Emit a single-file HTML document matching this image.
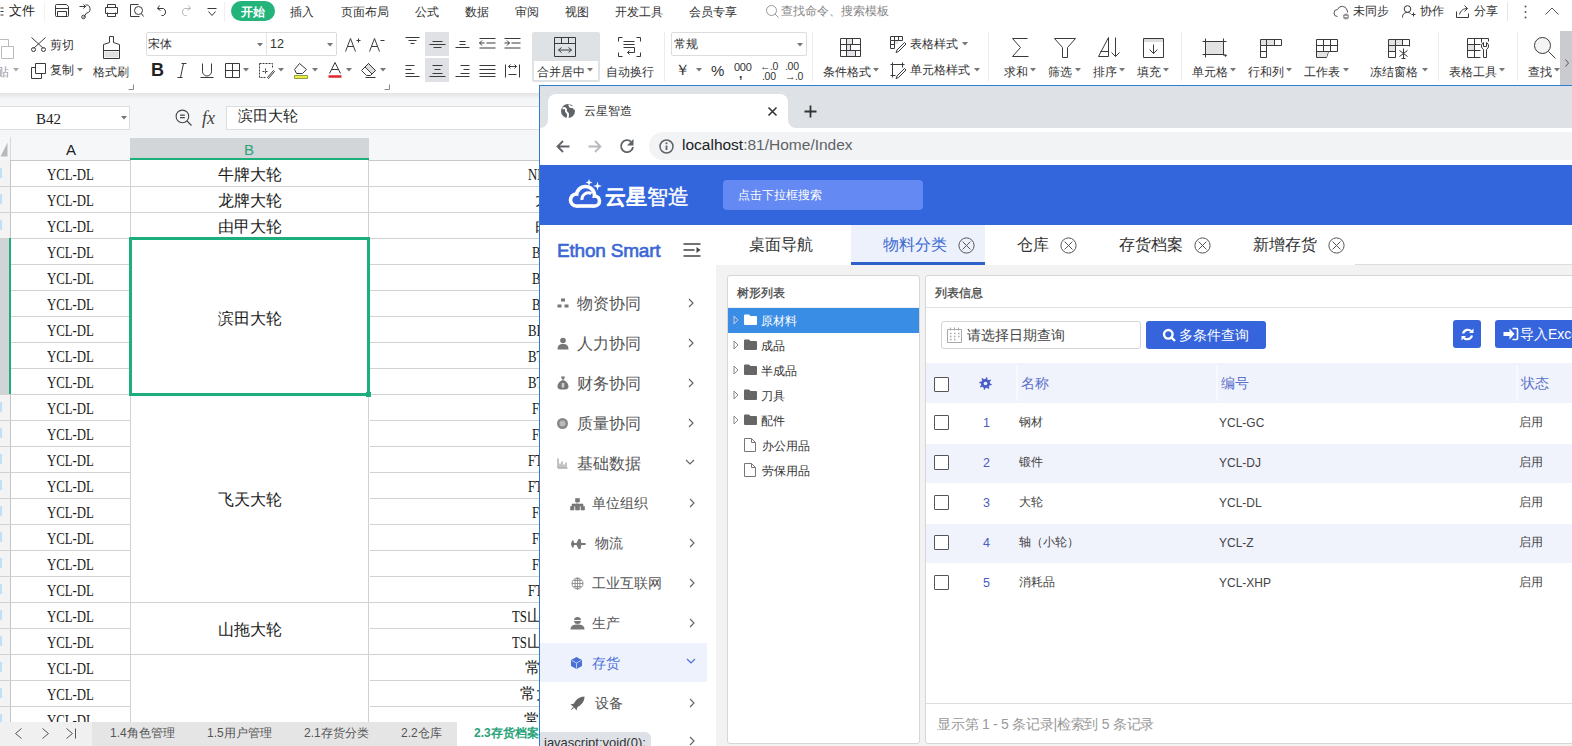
<!DOCTYPE html><html><head><meta charset="utf-8"><style>
*{box-sizing:border-box;margin:0;padding:0}
html,body{width:1572px;height:746px;overflow:hidden;background:#fff;font-family:"Liberation Sans",sans-serif;color:#333}
.a{position:absolute;white-space:nowrap;line-height:1}
svg.a{overflow:visible}
</style></head><body><div class="a" style="left:0;top:0;width:1572px;height:746px;background:#fff">
<div class="a" style="left:0px;top:0px;width:1572px;height:24px;background:#fff"></div>
<svg class="a" style="left:0px;top:6px;" width="4" height="10" viewBox="0 0 4 10" fill="none" stroke="#3a3a3a" stroke-width="1"><g transform="translate(.5 .5)"><path d="M0 1.5H3M0 5H3M0 8.5H3"/></g></svg>
<div class="a" style="left:9px;top:5px;font-size:12.5px;color:#222;">文件</div>
<div class="a" style="left:44px;top:2px;width:1px;height:20px;background:#f2f2f2"></div>
<svg class="a" style="left:54px;top:3px;" width="15" height="14" viewBox="0 0 15 14" fill="none" stroke="#3a3a3a" stroke-width="1"><g transform="translate(.5 .5)"><path d="M2 1H12L14 3V12A1 1 0 0 1 13 13H2A1 1 0 0 1 1 12V2A1 1 0 0 1 2 1Z M3 13V8H12V13 M1 5H14"/></g></svg>
<svg class="a" style="left:79px;top:3px;" width="15" height="16" viewBox="0 0 15 16" fill="none" stroke="#3a3a3a" stroke-width="1"><g transform="translate(.5 .5)"><path d="M0 3H6 M4 1L6 3L4 5 M6 1.5A4 4 0 1 1 7 9.5 L4 14"/><circle cx="4" cy="13.5" r="1.8"/></g></svg>
<svg class="a" style="left:104px;top:3px;" width="14" height="14" viewBox="0 0 14 14" fill="none" stroke="#3a3a3a" stroke-width="1"><g transform="translate(.5 .5)"><path d="M3 4V1H11V4 M1 4H13V10H1Z M3 9V13H11V9"/></g></svg>
<svg class="a" style="left:129px;top:3px;" width="15" height="14" viewBox="0 0 15 14" fill="none" stroke="#3a3a3a" stroke-width="1"><g transform="translate(.5 .5)"><path d="M1 1H9 M1 1V13H10" /><circle cx="9" cy="7" r="4"/><path d="M12 10L14 13"/></g></svg>
<svg class="a" style="left:156px;top:4px;" width="12" height="12" viewBox="0 0 12 12" fill="none" stroke="#3a3a3a" stroke-width="1"><g transform="translate(.5 .5)"><path d="M3 1L1 4L4 6 M1 4H7A4 4 0 0 1 7 11H5"/></g></svg>
<svg class="a" style="left:179px;top:4px;opacity:.35" width="12" height="12" viewBox="0 0 12 12" fill="none" stroke="#3a3a3a" stroke-width="1"><g transform="translate(.5 .5)"><path d="M9 1L11 4L8 6 M11 4H5A4 4 0 0 0 5 11H7"/></g></svg>
<svg class="a" style="left:206px;top:7px;" width="11" height="9" viewBox="0 0 11 9" fill="none" stroke="#3a3a3a" stroke-width="1"><g transform="translate(.5 .5)"><path d="M1 1H10 M2 4L5.5 8L9 4"/></g></svg>
<div class="a" style="left:224px;top:2px;width:1px;height:20px;background:#f0f0f0"></div>
<div class="a" style="left:231px;top:1px;width:44px;height:20px;background:#22b47b;border-radius:10px"></div>
<div class="a" style="left:241px;top:5.5px;font-size:12px;color:#fff;font-weight:bold">开始</div>
<div class="a" style="left:290px;top:6px;font-size:12px;color:#333;">插入</div>
<div class="a" style="left:341px;top:6px;font-size:12px;color:#333;">页面布局</div>
<div class="a" style="left:415px;top:6px;font-size:12px;color:#333;">公式</div>
<div class="a" style="left:465px;top:6px;font-size:12px;color:#333;">数据</div>
<div class="a" style="left:515px;top:6px;font-size:12px;color:#333;">审阅</div>
<div class="a" style="left:565px;top:6px;font-size:12px;color:#333;">视图</div>
<div class="a" style="left:615px;top:6px;font-size:12px;color:#333;">开发工具</div>
<div class="a" style="left:689px;top:6px;font-size:12px;color:#333;">会员专享</div>
<svg class="a" style="left:765px;top:4px;stroke:#999" width="14" height="14" viewBox="0 0 14 14" fill="none" stroke="#3a3a3a" stroke-width="1"><g transform="translate(.5 .5)"><circle cx="6" cy="6" r="5"/><path d="M9.5 9.5L13 13"/></g></svg>
<div class="a" style="left:781px;top:5px;font-size:12px;color:#888;">查找命令、搜索模板</div>
<svg class="a" style="left:1333px;top:4px;stroke:#555" width="17" height="15" viewBox="0 0 17 15" fill="none" stroke="#3a3a3a" stroke-width="1"><g transform="translate(.5 .5)"><path d="M4 12A3.5 3.5 0 0 1 4 5A5 5 0 0 1 13.5 5.5A3 3 0 0 1 14 8"/><circle cx="12.5" cy="12" r="3" fill="#999" stroke="none"/><path d="M11 12H14" stroke="#fff"/></g></svg>
<div class="a" style="left:1353px;top:5px;font-size:12px;color:#333;">未同步</div>
<svg class="a" style="left:1401px;top:4px;" width="14" height="14" viewBox="0 0 14 14" fill="none" stroke="#3a3a3a" stroke-width="1"><g transform="translate(.5 .5)"><circle cx="6" cy="4.5" r="3.3"/><path d="M1 13C1 9 3.5 8 6 8C7.5 8 8.5 8.4 9 9 M10 10H14 M12 8V12"/></g></svg>
<div class="a" style="left:1420px;top:5px;font-size:12px;color:#333;">协作</div>
<svg class="a" style="left:1455px;top:4px;" width="15" height="14" viewBox="0 0 15 14" fill="none" stroke="#3a3a3a" stroke-width="1"><g transform="translate(.5 .5)"><path d="M1 7V13H13V9 M4 10C5 6 8 4 12 4 M9 1L12 4L9 7"/></g></svg>
<div class="a" style="left:1474px;top:5px;font-size:12px;color:#333;">分享</div>
<div class="a" style="left:1507px;top:2px;width:1px;height:19px;background:#e6e6e6"></div>
<svg class="a" style="left:1523px;top:4px;" width="4" height="15" viewBox="0 0 4 15" fill="none" stroke="#3a3a3a" stroke-width="1"><g transform="translate(.5 .5)"><circle cx="2" cy="2" r="1" fill="#555" stroke="none"/><circle cx="2" cy="7.5" r="1" fill="#555" stroke="none"/><circle cx="2" cy="13" r="1" fill="#555" stroke="none"/></g></svg>
<svg class="a" style="left:1544px;top:6px;stroke:#555" width="15" height="9" viewBox="0 0 15 9" fill="none" stroke="#3a3a3a" stroke-width="1"><g transform="translate(.5 .5)"><path d="M1 8L7.5 1.5L14 8"/></g></svg>
<svg class="a" style="left:0px;top:36px;stroke:#bbb" width="14" height="22" viewBox="0 0 14 22" fill="none" stroke="#3a3a3a" stroke-width="1"><g transform="translate(.5 .5)"><path d="M-4 3H8V10 M1 10H13V22H1Z" /></g></svg>
<div class="a" style="left:0px;top:66px;font-size:12px;color:#999;left:-3px">贴</div>
<svg class="a" style="left:13px;top:68px" width="6" height="4"><path d="M0 0H6L3 3.5Z" fill="#aaa"/></svg>
<svg class="a" style="left:30px;top:36px;" width="17" height="16" viewBox="0 0 17 16" fill="none" stroke="#3a3a3a" stroke-width="1"><g transform="translate(.5 .5)"><path d="M1 1L13 12 M15 1L3 12"/><circle cx="3" cy="13" r="2"/><circle cx="13" cy="13" r="2"/></g></svg>
<div class="a" style="left:50px;top:39px;font-size:12px;color:#333;">剪切</div>
<svg class="a" style="left:30px;top:62px;" width="16" height="17" viewBox="0 0 16 17" fill="none" stroke="#3a3a3a" stroke-width="1"><g transform="translate(.5 .5)"><path d="M5 1H15V11H5Z M1 5H5 M1 5V16H11V11"/></g></svg>
<div class="a" style="left:50px;top:64px;font-size:12px;color:#333;">复制</div>
<svg class="a" style="left:77px;top:68px" width="6" height="4"><path d="M0 0H6L3 3.5Z" fill="#777"/></svg>
<svg class="a" style="left:102px;top:35px;" width="18" height="25" viewBox="0 0 18 25" fill="none" stroke="#3a3a3a" stroke-width="1"><g transform="translate(.5 .5)"><path d="M7 1H11V7L17 9V23H1V9L7 7Z M1 15H17"/><path d="M2 16H16V22H2Z" fill="#e1e1e1" stroke="none"/></g></svg>
<div class="a" style="left:93px;top:66px;font-size:12px;color:#333;">格式刷</div>
<svg class="a" style="left:128px;top:84px;stroke:#888" width="6" height="6" viewBox="0 0 6 6" fill="none" stroke="#3a3a3a" stroke-width="1"><g transform="translate(.5 .5)"><path d="M5 0V5H0"/></g></svg>
<div class="a" style="left:146px;top:32px;width:191px;height:24px;background:#fff;border:1px solid #dcdcdc;border-radius:2px"></div>
<div class="a" style="left:266px;top:33px;width:1px;height:22px;background:#e4e4e4"></div>
<div class="a" style="left:148px;top:38px;font-size:12px;color:#333;">宋体</div>
<svg class="a" style="left:257px;top:43px" width="6" height="4"><path d="M0 0H6L3 3.5Z" fill="#777"/></svg>
<div class="a" style="left:270px;top:38px;font-size:12.5px;color:#333;">12</div>
<svg class="a" style="left:327px;top:43px" width="6" height="4"><path d="M0 0H6L3 3.5Z" fill="#777"/></svg>
<svg class="a" style="left:344px;top:36px;" width="17" height="16" viewBox="0 0 17 16" fill="none" stroke="#3a3a3a" stroke-width="1"><g transform="translate(.5 .5)"><path d="M1 15L6 2L11 15 M3 10H9 M12 4H16 M14 2V6"/></g></svg>
<svg class="a" style="left:368px;top:36px;" width="17" height="16" viewBox="0 0 17 16" fill="none" stroke="#3a3a3a" stroke-width="1"><g transform="translate(.5 .5)"><path d="M1 15L6 2L11 15 M3 10H9 M12 4H16"/></g></svg>
<div class="a" style="left:151px;top:61px;font-size:18px;color:#222;font-weight:bold">B</div>
<svg class="a" style="left:176px;top:62px;" width="11" height="16" viewBox="0 0 11 16" fill="none" stroke="#3a3a3a" stroke-width="1"><g transform="translate(.5 .5)"><path d="M7 1L4 15 M5 1H10 M1 15H6"/></g></svg>
<svg class="a" style="left:199px;top:62px;" width="15" height="16" viewBox="0 0 15 16" fill="none" stroke="#3a3a3a" stroke-width="1"><g transform="translate(.5 .5)"><path d="M3 1V9A4.5 4.5 0 0 0 12 9V1 M1 15H14"/></g></svg>
<svg class="a" style="left:224px;top:62px;" width="16" height="16" viewBox="0 0 16 16" fill="none" stroke="#3a3a3a" stroke-width="1"><g transform="translate(.5 .5)"><path d="M1 1H15V15H1Z M8 1V15 M1 8H15"/></g></svg>
<svg class="a" style="left:243px;top:68px" width="6" height="4"><path d="M0 0H6L3 3.5Z" fill="#777"/></svg>
<svg class="a" style="left:258px;top:62px;" width="17" height="16" viewBox="0 0 17 16" fill="none" stroke="#3a3a3a" stroke-width="1"><g transform="translate(.5 .5)"><path d="M1 1H14V6 M1 1V15H7 M7 6V12 M4 9H10" stroke-dasharray="2 1"/><path d="M9 15L15 8L16 9L10 16Z"/></g></svg>
<svg class="a" style="left:278px;top:68px" width="6" height="4"><path d="M0 0H6L3 3.5Z" fill="#777"/></svg>
<svg class="a" style="left:292px;top:61px;" width="17" height="18" viewBox="0 0 17 18" fill="none" stroke="#3a3a3a" stroke-width="1"><g transform="translate(.5 .5)"><path d="M2 8L7 2L14 8L10 12H4Z"/><path d="M2 14H15V17H2Z" fill="#f0ee3a" stroke="#8aa04a"/></g></svg>
<svg class="a" style="left:312px;top:68px" width="6" height="4"><path d="M0 0H6L3 3.5Z" fill="#777"/></svg>
<svg class="a" style="left:327px;top:61px;" width="15" height="18" viewBox="0 0 15 18" fill="none" stroke="#3a3a3a" stroke-width="1"><g transform="translate(.5 .5)"><path d="M2 12L7.5 1L13 12 M4 8H11"/><path d="M1 15H14" stroke="#e0242b" stroke-width="2.5"/></g></svg>
<svg class="a" style="left:346px;top:68px" width="6" height="4"><path d="M0 0H6L3 3.5Z" fill="#777"/></svg>
<svg class="a" style="left:360px;top:62px;" width="17" height="16" viewBox="0 0 17 16" fill="none" stroke="#3a3a3a" stroke-width="1"><g transform="translate(.5 .5)"><path d="M1 8L8 1L15 8L10 13H6Z" /><path d="M8 1L15 8L11.5 11.5L4.5 4.5Z" fill="#ddd"/><path d="M5 15H15"/></g></svg>
<svg class="a" style="left:380px;top:68px" width="6" height="4"><path d="M0 0H6L3 3.5Z" fill="#777"/></svg>
<svg class="a" style="left:384px;top:84px;stroke:#888" width="6" height="6" viewBox="0 0 6 6" fill="none" stroke="#3a3a3a" stroke-width="1"><g transform="translate(.5 .5)"><path d="M5 0V5H0"/></g></svg>
<div class="a" style="left:425px;top:32px;width:24px;height:24px;background:#dfe1e4"></div>
<div class="a" style="left:425px;top:58px;width:24px;height:24px;background:#dfe1e4"></div>
<svg class="a" style="left:405px;top:36px;" width="14" height="9" viewBox="0 0 14 9" fill="none" stroke="#3a3a3a" stroke-width="1"><g transform="translate(.5 .5)"><path d="M0 1H14 M3 4H11 M5 7H9"/></g></svg>
<svg class="a" style="left:429px;top:40px;" width="16" height="8" viewBox="0 0 16 8" fill="none" stroke="#3a3a3a" stroke-width="1"><g transform="translate(.5 .5)"><path d="M0 4H16 M3 1H13 M4 7H12"/></g></svg>
<svg class="a" style="left:455px;top:40px;" width="14" height="9" viewBox="0 0 14 9" fill="none" stroke="#3a3a3a" stroke-width="1"><g transform="translate(.5 .5)"><path d="M4 1H10 M4 4H10 M0 7H14"/></g></svg>
<svg class="a" style="left:479px;top:37px;" width="16" height="12" viewBox="0 0 16 12" fill="none" stroke="#3a3a3a" stroke-width="1"><g transform="translate(.5 .5)"><path d="M0 1H16 M7 5.5H16 M0 10.5H16 M0 5.5H5 M2.5 3L0 5.5L2.5 8"/></g></svg>
<svg class="a" style="left:504px;top:37px;" width="16" height="12" viewBox="0 0 16 12" fill="none" stroke="#3a3a3a" stroke-width="1"><g transform="translate(.5 .5)"><path d="M0 1H16 M7 5.5H16 M0 10.5H16 M0 5.5H5 M2.5 3L5 5.5L2.5 8"/></g></svg>
<svg class="a" style="left:405px;top:64px;" width="14" height="12" viewBox="0 0 14 12" fill="none" stroke="#3a3a3a" stroke-width="1"><g transform="translate(.5 .5)"><path d="M0 1H9 M0 5H6 M0 9H9 M0 12H14"/></g></svg>
<svg class="a" style="left:429px;top:64px;" width="16" height="12" viewBox="0 0 16 12" fill="none" stroke="#3a3a3a" stroke-width="1"><g transform="translate(.5 .5)"><path d="M3 1H13 M5 5H11 M3 9H13 M0 12H16"/></g></svg>
<svg class="a" style="left:455px;top:64px;" width="14" height="12" viewBox="0 0 14 12" fill="none" stroke="#3a3a3a" stroke-width="1"><g transform="translate(.5 .5)"><path d="M5 1H14 M8 5H14 M5 9H14 M0 12H14"/></g></svg>
<svg class="a" style="left:479px;top:64px;" width="16" height="12" viewBox="0 0 16 12" fill="none" stroke="#3a3a3a" stroke-width="1"><g transform="translate(.5 .5)"><path d="M0 1H16 M0 5H16 M0 9H16 M0 12H16"/></g></svg>
<svg class="a" style="left:504px;top:63px;" width="16" height="14" viewBox="0 0 16 14" fill="none" stroke="#3a3a3a" stroke-width="1"><g transform="translate(.5 .5)"><path d="M1 1V14 M15 1V14 M4 3H12 M4 11H12 M4 3L6 1 M4 3L6 5 M12 3L10 1 M12 3L10 5"/></g></svg>
<div class="a" style="left:532px;top:32px;width:68px;height:50px;background:#dfe2e5;border-radius:2px"></div>
<div class="a" style="left:534px;top:61px;width:64px;height:19px;background:#fff"></div>
<svg class="a" style="left:554px;top:37px;" width="23" height="20" viewBox="0 0 23 20" fill="none" stroke="#3a3a3a" stroke-width="1"><g transform="translate(.5 .5)"><path d="M0 0H21V19H0Z M0 6H21 M7 0V6 M14 0V6 M4 12.5H17 M4 12.5L7 10 M4 12.5L7 15 M17 12.5L14 10 M17 12.5L14 15"/></g></svg>
<div class="a" style="left:537px;top:66px;font-size:12px;color:#333;">合并居中</div>
<svg class="a" style="left:587px;top:68px" width="6" height="4"><path d="M0 0H6L3 3.5Z" fill="#777"/></svg>
<svg class="a" style="left:618px;top:37px;" width="23" height="20" viewBox="0 0 23 20" fill="none" stroke="#3a3a3a" stroke-width="1"><g transform="translate(.5 .5)"><path d="M4 0H0V4 M18 0H22V4 M4 19H0V15 M18 19H22V15 M5 4H16 M5 7H16 M5 10H16V15H9 M11 13L9 15L11 17"/></g></svg>
<div class="a" style="left:606px;top:66px;font-size:12px;color:#333;">自动换行</div>
<div class="a" style="left:664px;top:32px;width:1px;height:49px;background:#ececec"></div>
<div class="a" style="left:671px;top:32px;width:136px;height:24px;background:#fff;border:1px solid #dcdcdc;border-radius:2px"></div>
<div class="a" style="left:674px;top:38px;font-size:12px;color:#333;">常规</div>
<svg class="a" style="left:797px;top:43px" width="6" height="4"><path d="M0 0H6L3 3.5Z" fill="#777"/></svg>
<div class="a" style="left:675px;top:62px;font-size:15px;color:#333;">￥</div>
<svg class="a" style="left:696px;top:68px" width="6" height="4"><path d="M0 0H6L3 3.5Z" fill="#777"/></svg>
<div class="a" style="left:711px;top:63px;font-size:15px;color:#333;">%</div>
<div class="a" style="left:734px;top:62px;font-size:11px;color:#333;letter-spacing:-0.3px">000</div>
<div class="a" style="left:739px;top:68px;font-size:12px;color:#333;font-weight:bold">,</div>
<div class="a" style="left:760px;top:61px;font-size:10.5px;color:#333;letter-spacing:-0.5px">←.0</div>
<div class="a" style="left:762px;top:71px;font-size:10.5px;color:#333;letter-spacing:-0.3px">.00</div>
<div class="a" style="left:785px;top:61px;font-size:10.5px;color:#333;letter-spacing:-0.3px">.00</div>
<div class="a" style="left:785px;top:71px;font-size:10.5px;color:#333;letter-spacing:-0.5px">→.0</div>
<div class="a" style="left:812px;top:32px;width:1px;height:49px;background:#ececec"></div>
<svg class="a" style="left:840px;top:38px;" width="22" height="20" viewBox="0 0 22 20" fill="none" stroke="#3a3a3a" stroke-width="1"><g transform="translate(.5 .5)"><path d="M6 0H12V6H6Z M6 6H10V12H6Z M6 12H15V18H6Z" fill="#e2e4e8" stroke="none"/><path d="M0 0H20V18H0Z M0 6H20 M0 12H20 M6 0V18 M12 0V6 M10 6V12 M15 12V18"/></g></svg>
<div class="a" style="left:823px;top:66px;font-size:12px;color:#333;">条件格式</div>
<svg class="a" style="left:873px;top:68px" width="6" height="4"><path d="M0 0H6L3 3.5Z" fill="#777"/></svg>
<svg class="a" style="left:890px;top:36px;" width="16" height="17" viewBox="0 0 16 17" fill="none" stroke="#3a3a3a" stroke-width="1"><g transform="translate(.5 .5)"><path d="M0 0H12V4H0Z M0 4V12H4V0 M8 0V4 M0 8H4" /><path d="M4.5 4.5H7.5V7.5H4.5Z" fill="#e2e4e8" stroke="none"/><path d="M14 6L6.5 13.5L5.5 16L8 15L15.5 7.5Z"/></g></svg>
<div class="a" style="left:910px;top:38px;font-size:12px;color:#333;">表格样式</div>
<svg class="a" style="left:962px;top:42px" width="6" height="4"><path d="M0 0H6L3 3.5Z" fill="#777"/></svg>
<svg class="a" style="left:890px;top:62px;" width="16" height="17" viewBox="0 0 16 17" fill="none" stroke="#3a3a3a" stroke-width="1"><g transform="translate(.5 .5)"><path d="M2 0V15 M0 2H14 M12 0V5 M0 13H5 M14 6L6.5 13.5L5.5 16L8 15L15.5 7.5Z"/></g></svg>
<div class="a" style="left:910px;top:64px;font-size:12px;color:#333;">单元格样式</div>
<svg class="a" style="left:974px;top:68px" width="6" height="4"><path d="M0 0H6L3 3.5Z" fill="#777"/></svg>
<div class="a" style="left:988px;top:32px;width:1px;height:49px;background:#ececec"></div>
<svg class="a" style="left:1011px;top:37px;" width="18" height="21" viewBox="0 0 18 21" fill="none" stroke="#3a3a3a" stroke-width="1"><g transform="translate(.5 .5)"><path d="M16 1H1L9 10L1 19H17"/></g></svg>
<div class="a" style="left:1004px;top:66px;font-size:12px;color:#333;">求和</div>
<svg class="a" style="left:1030px;top:68px" width="6" height="4"><path d="M0 0H6L3 3.5Z" fill="#777"/></svg>
<svg class="a" style="left:1053px;top:37px;" width="23" height="21" viewBox="0 0 23 21" fill="none" stroke="#3a3a3a" stroke-width="1"><g transform="translate(.5 .5)"><path d="M1 1H22L14 10V20H9V10Z"/></g></svg>
<div class="a" style="left:1048px;top:66px;font-size:12px;color:#333;">筛选</div>
<svg class="a" style="left:1075px;top:68px" width="6" height="4"><path d="M0 0H6L3 3.5Z" fill="#777"/></svg>
<svg class="a" style="left:1097px;top:36px;" width="24" height="22" viewBox="0 0 24 22" fill="none" stroke="#3a3a3a" stroke-width="1"><g transform="translate(.5 .5)"><path d="M1 20L11 1V20Z M3 15H11 M18 1V20 M14 16L18 20L22 16"/></g></svg>
<div class="a" style="left:1093px;top:66px;font-size:12px;color:#333;">排序</div>
<svg class="a" style="left:1119px;top:68px" width="6" height="4"><path d="M0 0H6L3 3.5Z" fill="#777"/></svg>
<svg class="a" style="left:1142px;top:37px;" width="22" height="21" viewBox="0 0 22 21" fill="none" stroke="#3a3a3a" stroke-width="1"><g transform="translate(.5 .5)"><path d="M1 1H21V20H1Z M11 7V16 M7 12L11 16L15 12"/><path d="M1.5 1.5H20.5V4.5H1.5Z" fill="#ddd" stroke="none"/></g></svg>
<div class="a" style="left:1137px;top:66px;font-size:12px;color:#333;">填充</div>
<svg class="a" style="left:1163px;top:68px" width="6" height="4"><path d="M0 0H6L3 3.5Z" fill="#777"/></svg>
<div class="a" style="left:1181px;top:32px;width:1px;height:49px;background:#ececec"></div>
<svg class="a" style="left:1202px;top:38px;" width="25" height="20" viewBox="0 0 25 20" fill="none" stroke="#3a3a3a" stroke-width="1"><g transform="translate(.5 .5)"><path d="M0 3H24 M0 16H22 M3 0V19 M21 0V17"/><path d="M3.5 3.5H20.5V15.5H3.5Z" fill="#e3e3e3" stroke="none"/><circle cx="23" cy="17" r=".8" fill="#444"/></g></svg>
<div class="a" style="left:1192px;top:66px;font-size:12px;color:#333;">单元格</div>
<svg class="a" style="left:1230px;top:68px" width="6" height="4"><path d="M0 0H6L3 3.5Z" fill="#777"/></svg>
<svg class="a" style="left:1259px;top:38px;" width="23" height="20" viewBox="0 0 23 20" fill="none" stroke="#3a3a3a" stroke-width="1"><g transform="translate(.5 .5)"><path d="M1 1H22V7H1Z M1 7V19H7V1 M7 13H1 M15 1V7"/><path d="M1.5 1.5H6.5V6.5H1.5Z M7.5 1.5H14.5V6.5H7.5Z" fill="#e3e3e3" stroke="none"/></g></svg>
<div class="a" style="left:1248px;top:66px;font-size:12px;color:#333;">行和列</div>
<svg class="a" style="left:1286px;top:68px" width="6" height="4"><path d="M0 0H6L3 3.5Z" fill="#777"/></svg>
<svg class="a" style="left:1315px;top:38px;" width="23" height="20" viewBox="0 0 23 20" fill="none" stroke="#3a3a3a" stroke-width="1"><g transform="translate(.5 .5)"><path d="M1 1H22V13H13L11 19H1Z M1 7H22 M1 13H13 M8 1V13 M15 1V13"/><path d="M1.5 13.5H12.5L11 18.5H1.5Z" fill="#e3e3e3" stroke="none"/></g></svg>
<div class="a" style="left:1304px;top:66px;font-size:12px;color:#333;">工作表</div>
<svg class="a" style="left:1343px;top:68px" width="6" height="4"><path d="M0 0H6L3 3.5Z" fill="#777"/></svg>
<svg class="a" style="left:1387px;top:38px;" width="23" height="21" viewBox="0 0 23 21" fill="none" stroke="#3a3a3a" stroke-width="1"><g transform="translate(.5 .5)"><path d="M1 19V1H22V8 M1 7H22 M1 13H8 M8 1V19H1 M15 1V7 M16 10V20 M12 12L20 18 M20 12L12 18 M14 20H18"/><path d="M1.5 1.5H7.5V6.5H1.5Z M8.5 1.5H14.5V6.5H8.5Z M1.5 7.5H7.5V12.5H1.5Z" fill="#e3e3e3" stroke="none"/></g></svg>
<div class="a" style="left:1370px;top:66px;font-size:12px;color:#333;">冻结窗格</div>
<svg class="a" style="left:1422px;top:68px" width="6" height="4"><path d="M0 0H6L3 3.5Z" fill="#777"/></svg>
<div class="a" style="left:1438px;top:32px;width:1px;height:49px;background:#ececec"></div>
<svg class="a" style="left:1466px;top:37px;" width="24" height="21" viewBox="0 0 24 21" fill="none" stroke="#3a3a3a" stroke-width="1"><g transform="translate(.5 .5)"><path d="M14 20H1V1H22V4 M1 7H14 M1 13H14 M8 1V20 M15 1V5"/><path d="M1.5 7.5H7.5V12.5H1.5Z" fill="#e3e3e3" stroke="none"/><path d="M17 5A4 4 0 0 0 17 12V20H20V12A4 4 0 0 0 20 5V9H17Z" fill="#fff"/></g></svg>
<div class="a" style="left:1449px;top:66px;font-size:12px;color:#333;">表格工具</div>
<svg class="a" style="left:1499px;top:68px" width="6" height="4"><path d="M0 0H6L3 3.5Z" fill="#777"/></svg>
<div class="a" style="left:1517px;top:32px;width:1px;height:49px;background:#ececec"></div>
<svg class="a" style="left:1533px;top:36px;" width="23" height="22" viewBox="0 0 23 22" fill="none" stroke="#3a3a3a" stroke-width="1"><g transform="translate(.5 .5)"><circle cx="9" cy="9" r="8" fill="#f4f4f4"/><path d="M15 15L22 22"/></g></svg>
<div class="a" style="left:1528px;top:66px;font-size:12px;color:#333;">查找</div>
<svg class="a" style="left:1554px;top:68px" width="6" height="4"><path d="M0 0H6L3 3.5Z" fill="#777"/></svg>
<div class="a" style="left:1560px;top:31px;width:12px;height:54px;background:#cacbcf"></div>
<svg class="a" style="left:1564px;top:58px;stroke:#555" width="5" height="9" viewBox="0 0 5 9" fill="none" stroke="#3a3a3a" stroke-width="1"><g transform="translate(.5 .5)"><path d="M1 1L4 4.5L1 8"/></g></svg>
<div class="a" style="left:0px;top:93px;width:1572px;height:44px;background:#f5f6f7"></div>
<div class="a" style="left:0px;top:93px;width:1572px;height:6px;background:linear-gradient(#e3e3e3,#f5f6f7)"></div>
<div class="a" style="left:0px;top:106px;width:130px;height:24px;background:#fff;border:1px solid #dedede;border-left:none"></div>
<div class="a" style="left:36px;top:112px;font-size:15px;color:#222;font-family:'Liberation Serif',serif">B42</div>
<svg class="a" style="left:121px;top:116px" width="6" height="4"><path d="M0 0H6L3 3.5Z" fill="#777"/></svg>
<svg class="a" style="left:175px;top:109px" width="18" height="18" viewBox="0 0 18 18"><circle cx="7.4" cy="7.4" r="6.3" fill="none" stroke="#444" stroke-width="1.1"/><path d="M5 6.2H9.8M5 8.7H9.8" stroke="#444" stroke-width="1.2"/><path d="M12 12L16.5 16.5" stroke="#444" stroke-width="1.1"/></svg>
<div class="a" style="left:202px;top:109px;font-size:18px;color:#444;font-family:'Liberation Serif',serif;font-style:italic">fx</div>
<div class="a" style="left:226px;top:106px;width:1346px;height:24px;background:#fff;border:1px solid #dedede"></div>
<div class="a" style="left:238px;top:108px;font-size:15px;color:#222;">滨田大轮</div>
<div class="a" style="left:0px;top:137px;width:1572px;height:23px;background:#f6f7f8"></div>
<div class="a" style="left:10px;top:137px;width:1px;height:23px;background:#d8d8d8"></div>
<svg class="a" style="left:0px;top:142px;" width="7" height="14" viewBox="0 0 7 14" fill="none" stroke="#3a3a3a" stroke-width="1"><g transform="translate(.5 .5)"><path d="M7 0V14H0Z" fill="#b9b9b9" stroke="none"/></g></svg>
<div class="a" style="left:130px;top:138px;width:239px;height:22px;background:#d3d6d9"></div>
<div class="a" style="left:130px;top:158px;width:239px;height:2px;background:#1cae7b"></div>
<div class="a" style="left:66px;top:142px;font-size:15px;color:#222;">A</div>
<div class="a" style="left:244px;top:142px;font-size:15px;color:#2aa37a;">B</div>
<div class="a" style="left:0px;top:160px;width:130px;height:1px;background:#c8c8c8"></div>
<div class="a" style="left:369px;top:160px;width:1203px;height:1px;background:#c8c8c8"></div>
<div class="a" style="left:0px;top:160px;width:10px;height:562px;background:#f3f3f3"></div>
<div class="a" style="left:0px;top:238px;width:9px;height:156px;background:#d1d4d7"></div>
<div class="a" style="left:10px;top:160px;width:1px;height:78px;background:#c4c4c4"></div>
<div class="a" style="left:10px;top:394px;width:1px;height:328px;background:#c4c4c4"></div>
<div class="a" style="left:0px;top:168px;width:2px;height:10px;background:#bfe0f5"></div>
<div class="a" style="left:0px;top:194px;width:2px;height:10px;background:#bfe0f5"></div>
<div class="a" style="left:0px;top:220px;width:2px;height:10px;background:#bfe0f5"></div>
<div class="a" style="left:0px;top:402px;width:2px;height:10px;background:#bfe0f5"></div>
<div class="a" style="left:0px;top:428px;width:2px;height:10px;background:#bfe0f5"></div>
<div class="a" style="left:0px;top:454px;width:2px;height:10px;background:#bfe0f5"></div>
<div class="a" style="left:0px;top:480px;width:2px;height:10px;background:#bfe0f5"></div>
<div class="a" style="left:0px;top:506px;width:2px;height:10px;background:#bfe0f5"></div>
<div class="a" style="left:0px;top:532px;width:2px;height:10px;background:#bfe0f5"></div>
<div class="a" style="left:0px;top:558px;width:2px;height:10px;background:#bfe0f5"></div>
<div class="a" style="left:0px;top:584px;width:2px;height:10px;background:#bfe0f5"></div>
<div class="a" style="left:0px;top:610px;width:2px;height:10px;background:#bfe0f5"></div>
<div class="a" style="left:0px;top:636px;width:2px;height:10px;background:#bfe0f5"></div>
<div class="a" style="left:0px;top:662px;width:2px;height:10px;background:#bfe0f5"></div>
<div class="a" style="left:0px;top:688px;width:2px;height:10px;background:#bfe0f5"></div>
<div class="a" style="left:0px;top:714px;width:2px;height:10px;background:#bfe0f5"></div>
<div class="a" style="left:0px;top:186px;width:130px;height:1px;background:#d2d2d2"></div>
<div class="a" style="left:370px;top:186px;width:200px;height:1px;background:#d2d2d2"></div>
<div class="a" style="left:130px;top:186px;width:240px;height:1px;background:#d2d2d2"></div>
<div class="a" style="left:0px;top:212px;width:130px;height:1px;background:#d2d2d2"></div>
<div class="a" style="left:370px;top:212px;width:200px;height:1px;background:#d2d2d2"></div>
<div class="a" style="left:130px;top:212px;width:240px;height:1px;background:#d2d2d2"></div>
<div class="a" style="left:0px;top:238px;width:130px;height:1px;background:#d2d2d2"></div>
<div class="a" style="left:370px;top:238px;width:200px;height:1px;background:#d2d2d2"></div>
<div class="a" style="left:0px;top:264px;width:130px;height:1px;background:#d2d2d2"></div>
<div class="a" style="left:370px;top:264px;width:200px;height:1px;background:#d2d2d2"></div>
<div class="a" style="left:0px;top:290px;width:130px;height:1px;background:#d2d2d2"></div>
<div class="a" style="left:370px;top:290px;width:200px;height:1px;background:#d2d2d2"></div>
<div class="a" style="left:0px;top:316px;width:130px;height:1px;background:#d2d2d2"></div>
<div class="a" style="left:370px;top:316px;width:200px;height:1px;background:#d2d2d2"></div>
<div class="a" style="left:0px;top:342px;width:130px;height:1px;background:#d2d2d2"></div>
<div class="a" style="left:370px;top:342px;width:200px;height:1px;background:#d2d2d2"></div>
<div class="a" style="left:0px;top:368px;width:130px;height:1px;background:#d2d2d2"></div>
<div class="a" style="left:370px;top:368px;width:200px;height:1px;background:#d2d2d2"></div>
<div class="a" style="left:0px;top:394px;width:130px;height:1px;background:#d2d2d2"></div>
<div class="a" style="left:370px;top:394px;width:200px;height:1px;background:#d2d2d2"></div>
<div class="a" style="left:0px;top:420px;width:130px;height:1px;background:#d2d2d2"></div>
<div class="a" style="left:370px;top:420px;width:200px;height:1px;background:#d2d2d2"></div>
<div class="a" style="left:0px;top:446px;width:130px;height:1px;background:#d2d2d2"></div>
<div class="a" style="left:370px;top:446px;width:200px;height:1px;background:#d2d2d2"></div>
<div class="a" style="left:0px;top:472px;width:130px;height:1px;background:#d2d2d2"></div>
<div class="a" style="left:370px;top:472px;width:200px;height:1px;background:#d2d2d2"></div>
<div class="a" style="left:0px;top:498px;width:130px;height:1px;background:#d2d2d2"></div>
<div class="a" style="left:370px;top:498px;width:200px;height:1px;background:#d2d2d2"></div>
<div class="a" style="left:0px;top:524px;width:130px;height:1px;background:#d2d2d2"></div>
<div class="a" style="left:370px;top:524px;width:200px;height:1px;background:#d2d2d2"></div>
<div class="a" style="left:0px;top:550px;width:130px;height:1px;background:#d2d2d2"></div>
<div class="a" style="left:370px;top:550px;width:200px;height:1px;background:#d2d2d2"></div>
<div class="a" style="left:0px;top:576px;width:130px;height:1px;background:#d2d2d2"></div>
<div class="a" style="left:370px;top:576px;width:200px;height:1px;background:#d2d2d2"></div>
<div class="a" style="left:0px;top:602px;width:130px;height:1px;background:#d2d2d2"></div>
<div class="a" style="left:370px;top:602px;width:200px;height:1px;background:#d2d2d2"></div>
<div class="a" style="left:130px;top:602px;width:240px;height:1px;background:#d2d2d2"></div>
<div class="a" style="left:0px;top:628px;width:130px;height:1px;background:#d2d2d2"></div>
<div class="a" style="left:370px;top:628px;width:200px;height:1px;background:#d2d2d2"></div>
<div class="a" style="left:0px;top:654px;width:130px;height:1px;background:#d2d2d2"></div>
<div class="a" style="left:370px;top:654px;width:200px;height:1px;background:#d2d2d2"></div>
<div class="a" style="left:130px;top:654px;width:240px;height:1px;background:#d2d2d2"></div>
<div class="a" style="left:0px;top:680px;width:130px;height:1px;background:#d2d2d2"></div>
<div class="a" style="left:370px;top:680px;width:200px;height:1px;background:#d2d2d2"></div>
<div class="a" style="left:0px;top:706px;width:130px;height:1px;background:#d2d2d2"></div>
<div class="a" style="left:370px;top:706px;width:200px;height:1px;background:#d2d2d2"></div>
<div class="a" style="left:9px;top:238px;width:2px;height:156px;background:#1cae7b"></div>
<div class="a" style="left:130px;top:160px;width:1px;height:562px;background:#d2d2d2"></div>
<div class="a" style="left:368px;top:160px;width:1px;height:562px;background:#d2d2d2"></div>
<div class="a" style="left:47px;top:167px;font-size:16px;color:#1a1a1a;font-family:'Liberation Serif',serif;transform:scaleX(0.8);transform-origin:0 0">YCL-DL</div>
<div class="a" style="left:47px;top:193px;font-size:16px;color:#1a1a1a;font-family:'Liberation Serif',serif;transform:scaleX(0.8);transform-origin:0 0">YCL-DL</div>
<div class="a" style="left:47px;top:219px;font-size:16px;color:#1a1a1a;font-family:'Liberation Serif',serif;transform:scaleX(0.8);transform-origin:0 0">YCL-DL</div>
<div class="a" style="left:47px;top:245px;font-size:16px;color:#1a1a1a;font-family:'Liberation Serif',serif;transform:scaleX(0.8);transform-origin:0 0">YCL-DL</div>
<div class="a" style="left:47px;top:271px;font-size:16px;color:#1a1a1a;font-family:'Liberation Serif',serif;transform:scaleX(0.8);transform-origin:0 0">YCL-DL</div>
<div class="a" style="left:47px;top:297px;font-size:16px;color:#1a1a1a;font-family:'Liberation Serif',serif;transform:scaleX(0.8);transform-origin:0 0">YCL-DL</div>
<div class="a" style="left:47px;top:323px;font-size:16px;color:#1a1a1a;font-family:'Liberation Serif',serif;transform:scaleX(0.8);transform-origin:0 0">YCL-DL</div>
<div class="a" style="left:47px;top:349px;font-size:16px;color:#1a1a1a;font-family:'Liberation Serif',serif;transform:scaleX(0.8);transform-origin:0 0">YCL-DL</div>
<div class="a" style="left:47px;top:375px;font-size:16px;color:#1a1a1a;font-family:'Liberation Serif',serif;transform:scaleX(0.8);transform-origin:0 0">YCL-DL</div>
<div class="a" style="left:47px;top:401px;font-size:16px;color:#1a1a1a;font-family:'Liberation Serif',serif;transform:scaleX(0.8);transform-origin:0 0">YCL-DL</div>
<div class="a" style="left:47px;top:427px;font-size:16px;color:#1a1a1a;font-family:'Liberation Serif',serif;transform:scaleX(0.8);transform-origin:0 0">YCL-DL</div>
<div class="a" style="left:47px;top:453px;font-size:16px;color:#1a1a1a;font-family:'Liberation Serif',serif;transform:scaleX(0.8);transform-origin:0 0">YCL-DL</div>
<div class="a" style="left:47px;top:479px;font-size:16px;color:#1a1a1a;font-family:'Liberation Serif',serif;transform:scaleX(0.8);transform-origin:0 0">YCL-DL</div>
<div class="a" style="left:47px;top:505px;font-size:16px;color:#1a1a1a;font-family:'Liberation Serif',serif;transform:scaleX(0.8);transform-origin:0 0">YCL-DL</div>
<div class="a" style="left:47px;top:531px;font-size:16px;color:#1a1a1a;font-family:'Liberation Serif',serif;transform:scaleX(0.8);transform-origin:0 0">YCL-DL</div>
<div class="a" style="left:47px;top:557px;font-size:16px;color:#1a1a1a;font-family:'Liberation Serif',serif;transform:scaleX(0.8);transform-origin:0 0">YCL-DL</div>
<div class="a" style="left:47px;top:583px;font-size:16px;color:#1a1a1a;font-family:'Liberation Serif',serif;transform:scaleX(0.8);transform-origin:0 0">YCL-DL</div>
<div class="a" style="left:47px;top:609px;font-size:16px;color:#1a1a1a;font-family:'Liberation Serif',serif;transform:scaleX(0.8);transform-origin:0 0">YCL-DL</div>
<div class="a" style="left:47px;top:635px;font-size:16px;color:#1a1a1a;font-family:'Liberation Serif',serif;transform:scaleX(0.8);transform-origin:0 0">YCL-DL</div>
<div class="a" style="left:47px;top:661px;font-size:16px;color:#1a1a1a;font-family:'Liberation Serif',serif;transform:scaleX(0.8);transform-origin:0 0">YCL-DL</div>
<div class="a" style="left:47px;top:687px;font-size:16px;color:#1a1a1a;font-family:'Liberation Serif',serif;transform:scaleX(0.8);transform-origin:0 0">YCL-DL</div>
<div class="a" style="left:47px;top:713px;font-size:16px;color:#1a1a1a;font-family:'Liberation Serif',serif;transform:scaleX(0.8);transform-origin:0 0">YCL-DL</div>
<div class="a" style="left:218px;top:167px;font-size:16px;color:#1a1a1a;">牛牌大轮</div>
<div class="a" style="left:218px;top:193px;font-size:16px;color:#1a1a1a;">龙牌大轮</div>
<div class="a" style="left:218px;top:219px;font-size:16px;color:#1a1a1a;">由甲大轮</div>
<div class="a" style="left:218px;top:311px;font-size:16px;color:#1a1a1a;">滨田大轮</div>
<div class="a" style="left:218px;top:492px;font-size:16px;color:#1a1a1a;">飞天大轮</div>
<div class="a" style="left:218px;top:622px;font-size:16px;color:#1a1a1a;">山拖大轮</div>
<div class="a" style="left:129px;top:237px;width:241px;height:159px;border:3px solid #1cae7b"></div>
<div class="a" style="left:366px;top:392px;width:5px;height:5px;background:#1cae7b"></div>
<div class="a" style="left:528px;top:167px;font-size:16px;color:#1a1a1a;font-family:'Liberation Serif',serif;transform:scaleX(0.8);transform-origin:0 0">NE</div>
<div class="a" style="left:532px;top:245px;font-size:16px;color:#1a1a1a;font-family:'Liberation Serif',serif;transform:scaleX(0.8);transform-origin:0 0">B</div>
<div class="a" style="left:532px;top:271px;font-size:16px;color:#1a1a1a;font-family:'Liberation Serif',serif;transform:scaleX(0.8);transform-origin:0 0">B</div>
<div class="a" style="left:532px;top:297px;font-size:16px;color:#1a1a1a;font-family:'Liberation Serif',serif;transform:scaleX(0.8);transform-origin:0 0">B</div>
<div class="a" style="left:528px;top:323px;font-size:16px;color:#1a1a1a;font-family:'Liberation Serif',serif;transform:scaleX(0.8);transform-origin:0 0">BE</div>
<div class="a" style="left:528px;top:349px;font-size:16px;color:#1a1a1a;font-family:'Liberation Serif',serif;transform:scaleX(0.8);transform-origin:0 0">BT</div>
<div class="a" style="left:528px;top:375px;font-size:16px;color:#1a1a1a;font-family:'Liberation Serif',serif;transform:scaleX(0.8);transform-origin:0 0">BT</div>
<div class="a" style="left:532px;top:401px;font-size:16px;color:#1a1a1a;font-family:'Liberation Serif',serif;transform:scaleX(0.8);transform-origin:0 0">F</div>
<div class="a" style="left:532px;top:427px;font-size:16px;color:#1a1a1a;font-family:'Liberation Serif',serif;transform:scaleX(0.8);transform-origin:0 0">F</div>
<div class="a" style="left:528px;top:453px;font-size:16px;color:#1a1a1a;font-family:'Liberation Serif',serif;transform:scaleX(0.8);transform-origin:0 0">FT</div>
<div class="a" style="left:528px;top:479px;font-size:16px;color:#1a1a1a;font-family:'Liberation Serif',serif;transform:scaleX(0.8);transform-origin:0 0">FT</div>
<div class="a" style="left:532px;top:505px;font-size:16px;color:#1a1a1a;font-family:'Liberation Serif',serif;transform:scaleX(0.8);transform-origin:0 0">F</div>
<div class="a" style="left:532px;top:531px;font-size:16px;color:#1a1a1a;font-family:'Liberation Serif',serif;transform:scaleX(0.8);transform-origin:0 0">F</div>
<div class="a" style="left:532px;top:557px;font-size:16px;color:#1a1a1a;font-family:'Liberation Serif',serif;transform:scaleX(0.8);transform-origin:0 0">F</div>
<div class="a" style="left:528px;top:583px;font-size:16px;color:#1a1a1a;font-family:'Liberation Serif',serif;transform:scaleX(0.8);transform-origin:0 0">FT</div>
<div class="a" style="left:512px;top:609px;font-size:16px;color:#1a1a1a;font-family:'Liberation Serif',serif;transform:scaleX(0.8);transform-origin:0 0">TS</div>
<div class="a" style="left:512px;top:635px;font-size:16px;color:#1a1a1a;font-family:'Liberation Serif',serif;transform:scaleX(0.8);transform-origin:0 0">TS</div>
<div class="a" style="left:535px;top:192px;font-size:16px;color:#1a1a1a;">大</div>
<div class="a" style="left:535px;top:218px;font-size:16px;color:#1a1a1a;">由</div>
<div class="a" style="left:527px;top:608px;font-size:16px;color:#1a1a1a;">山</div>
<div class="a" style="left:527px;top:634px;font-size:16px;color:#1a1a1a;">山</div>
<div class="a" style="left:525px;top:660px;font-size:16px;color:#1a1a1a;">常</div>
<div class="a" style="left:520px;top:686px;font-size:16px;color:#1a1a1a;">常大</div>
<div class="a" style="left:524px;top:712px;font-size:16px;color:#1a1a1a;">常</div>
<div class="a" style="left:0px;top:722px;width:1572px;height:24px;background:#f0f0f0"></div>
<div class="a" style="left:92px;top:722px;width:1480px;height:24px;background:#e5e5e5"></div>
<svg class="a" style="left:14px;top:727px;stroke:#555" width="8" height="12" viewBox="0 0 8 12" fill="none" stroke="#3a3a3a" stroke-width="1"><g transform="translate(.5 .5)"><path d="M7 1L1 6L7 11"/></g></svg>
<svg class="a" style="left:41px;top:727px;stroke:#555" width="8" height="12" viewBox="0 0 8 12" fill="none" stroke="#3a3a3a" stroke-width="1"><g transform="translate(.5 .5)"><path d="M1 1L7 6L1 11"/></g></svg>
<svg class="a" style="left:65px;top:727px;stroke:#555" width="11" height="12" viewBox="0 0 11 12" fill="none" stroke="#3a3a3a" stroke-width="1"><g transform="translate(.5 .5)"><path d="M1 1L7 6L1 11 M10 1V11"/></g></svg>
<div class="a" style="left:110px;top:727px;font-size:12px;color:#555;">1.4角色管理</div>
<div class="a" style="left:207px;top:727px;font-size:12px;color:#555;">1.5用户管理</div>
<div class="a" style="left:304px;top:727px;font-size:12px;color:#555;">2.1存货分类</div>
<div class="a" style="left:401px;top:727px;font-size:12px;color:#555;">2.2仓库</div>
<div class="a" style="left:457px;top:722px;width:120px;height:24px;background:#fff"></div>
<div class="a" style="left:474px;top:727px;font-size:12px;color:#2aa37a;font-weight:bold">2.3存货档案</div>
</div>
<div class="a" style="left:539px;top:85px;width:1033px;height:661px;overflow:hidden;background:#fff">
<div class="a" style="left:-539px;top:-85px;width:1572px;height:746px">
<div class="a" style="left:539px;top:85px;width:1033px;height:1px;background:#2c7dd3"></div>
<div class="a" style="left:539px;top:85px;width:1px;height:661px;background:#2c7dd3"></div>
<div class="a" style="left:540px;top:86px;width:1032px;height:42px;background:#dee1e6"></div>
<div class="a" style="left:548px;top:94px;width:240px;height:34px;background:#fff;border-radius:8px 8px 0 0"></div>
<svg class="a" style="left:540px;top:120px" width="8" height="8"><path d="M0 8A8 8 0 0 0 8 0V8Z" fill="#fff"/></svg>
<svg class="a" style="left:788px;top:120px" width="8" height="8"><path d="M8 8A8 8 0 0 1 0 0V8Z" fill="#fff"/></svg>
<svg class="a" style="left:561px;top:104px" width="14" height="14" viewBox="0 0 14 14"><circle cx="7" cy="7" r="7" fill="#5f6368"/><path d="M1.5 4.5C3.5 3.5 5.5 4.5 5 6.5C4.6 8 6.5 8.5 7 10C7.3 11.5 6.5 12.5 6.8 14 M8.5 0.5C8 2 9.5 3.5 11 3C12.5 2.8 13.3 4 13.8 5.5" stroke="#fff" stroke-width="2" fill="none"/></svg>
<div class="a" style="left:584px;top:105px;font-size:12px;color:#333;">云星智造</div>
<svg class="a" style="left:767px;top:106px;stroke:#333;stroke-width:1.6" width="10" height="10" viewBox="0 0 10 10" fill="none" stroke="#3a3a3a" stroke-width="1"><g transform="translate(.5 .5)"><path d="M1 1L9 9M9 1L1 9"/></g></svg>
<svg class="a" style="left:803px;top:104px;stroke:#333;stroke-width:1.8" width="14" height="14" viewBox="0 0 14 14" fill="none" stroke="#3a3a3a" stroke-width="1"><g transform="translate(.5 .5)"><path d="M7 1V13M1 7H13"/></g></svg>
<div class="a" style="left:540px;top:128px;width:1032px;height:37px;background:#fff"></div>
<svg class="a" style="left:555px;top:139px;stroke:#5f6368;stroke-width:1.8" width="15" height="14" viewBox="0 0 15 14" fill="none" stroke="#3a3a3a" stroke-width="1"><g transform="translate(.5 .5)"><path d="M14 7H2M7.5 1.5L2 7L7.5 12.5"/></g></svg>
<svg class="a" style="left:587px;top:139px;stroke:#b8babe;stroke-width:1.8" width="15" height="14" viewBox="0 0 15 14" fill="none" stroke="#3a3a3a" stroke-width="1"><g transform="translate(.5 .5)"><path d="M1 7H13M7.5 1.5L13 7L7.5 12.5"/></g></svg>
<svg class="a" style="left:619px;top:138px;stroke:#5f6368;stroke-width:1.8" width="15" height="15" viewBox="0 0 15 15" fill="none" stroke="#3a3a3a" stroke-width="1"><g transform="translate(.5 .5)"><path d="M11.7 3.3A6 6 0 1 0 13.5 8.5"/><path d="M14 0.5V7H7.5Z" fill="#5f6368" stroke="none"/></g></svg>
<div class="a" style="left:649px;top:132px;width:940px;height:28px;background:#f1f3f4;border-radius:14px"></div>
<svg class="a" style="left:659px;top:139px" width="15" height="15" viewBox="0 0 15 15"><circle cx="7.5" cy="7.5" r="6.5" fill="none" stroke="#5f6368" stroke-width="1.5"/><path d="M7.5 6.5V11" stroke="#5f6368" stroke-width="1.8"/><circle cx="7.5" cy="4.3" r="1" fill="#5f6368"/></svg>
<div class="a" style="left:682px;top:137px;font-size:15.5px;color:#202124;">localhost<span style="color:#5f6368">:81/Home/Index</span></div>
<div class="a" style="left:540px;top:165px;width:1032px;height:60px;background:#3366dc"></div>
<svg class="a" style="left:566px;top:179px" width="38" height="32" viewBox="0 0 38 32"><g fill="#fff"><circle cx="10.5" cy="21" r="7.8"/><circle cx="19.5" cy="16.5" r="10.8"/><circle cx="28.5" cy="22" r="6.8"/><rect x="10.5" y="21" width="18" height="7.8"/></g><g fill="#3564dc"><circle cx="10.5" cy="21" r="4.2"/><circle cx="19.5" cy="16.5" r="7.2"/><circle cx="28.5" cy="22" r="3.2"/><rect x="10.5" y="19" width="18" height="6.2"/></g><path d="M16 21A6.5 6.5 0 0 1 25.5 14.5" stroke="#fff" stroke-width="3" fill="none"/><path d="M23 0L23.9 2.6L26.5 3.5L23.9 4.4L23 7L22.1 4.4L19.5 3.5L22.1 2.6Z M31.5 2.5L32.5 6L36 7L32.5 8L31.5 11.5L30.5 8L27 7L30.5 6Z" fill="#fff"/></svg>
<div class="a" style="left:605px;top:186px;font-size:21px;color:#fff;-webkit-text-stroke:0.4px #fff"><span style="-webkit-text-stroke:1.1px #fff">云星</span>智造</div>
<div class="a" style="left:723px;top:180px;width:200px;height:30px;background:#6489f2;border-radius:4px"></div>
<div class="a" style="left:738px;top:189px;font-size:12px;color:#fff;">点击下拉框搜索</div>
<div class="a" style="left:540px;top:225px;width:1032px;height:40px;background:#fff"></div>
<div class="a" style="left:557px;top:241px;font-size:19px;color:#3a66d6;-webkit-text-stroke:0.6px #3a66d6;letter-spacing:-0.2px">Ethon Smart</div>
<svg class="a" style="left:682px;top:242px;stroke:#444;stroke-width:1.6" width="19" height="16" viewBox="0 0 19 16" fill="none" stroke="#3a3a3a" stroke-width="1"><g transform="translate(.5 .5)"><path d="M1 1.5H18M1 7.5H12M1 13.5H18"/><path d="M14 4.5L18 7.5L14 10.5Z" fill="#444" stroke="none"/></g></svg>
<div class="a" style="left:749px;top:237px;font-size:16px;color:#333;">桌面导航</div>
<div class="a" style="left:851px;top:225px;width:134px;height:40px;background:#edf1fc"></div>
<div class="a" style="left:851px;top:262px;width:134px;height:3px;background:#2f62c9"></div>
<div class="a" style="left:883px;top:237px;font-size:16px;color:#3e6cd2;">物料分类</div>
<svg class="a" style="left:958px;top:237px" width="17" height="17" viewBox="0 0 17 17"><circle cx="8.5" cy="8.5" r="7.6" fill="none" stroke="#555" stroke-width="1"/><path d="M4.6 4.6L12.4 12.4M12.4 4.6L4.6 12.4" stroke="#555" stroke-width="1"/></svg>
<div class="a" style="left:1017px;top:237px;font-size:16px;color:#333;">仓库</div>
<svg class="a" style="left:1060px;top:237px" width="17" height="17" viewBox="0 0 17 17"><circle cx="8.5" cy="8.5" r="7.6" fill="none" stroke="#555" stroke-width="1"/><path d="M4.6 4.6L12.4 12.4M12.4 4.6L4.6 12.4" stroke="#555" stroke-width="1"/></svg>
<div class="a" style="left:1119px;top:237px;font-size:16px;color:#333;">存货档案</div>
<svg class="a" style="left:1194px;top:237px" width="17" height="17" viewBox="0 0 17 17"><circle cx="8.5" cy="8.5" r="7.6" fill="none" stroke="#555" stroke-width="1"/><path d="M4.6 4.6L12.4 12.4M12.4 4.6L4.6 12.4" stroke="#555" stroke-width="1"/></svg>
<div class="a" style="left:1253px;top:237px;font-size:16px;color:#333;">新增存货</div>
<svg class="a" style="left:1328px;top:237px" width="17" height="17" viewBox="0 0 17 17"><circle cx="8.5" cy="8.5" r="7.6" fill="none" stroke="#555" stroke-width="1"/><path d="M4.6 4.6L12.4 12.4M12.4 4.6L4.6 12.4" stroke="#555" stroke-width="1"/></svg>
<div class="a" style="left:540px;top:265px;width:176px;height:481px;background:#fff"></div>
<div class="a" style="left:577px;top:296px;font-size:16px;color:#555;">物资协同</div>
<svg class="a" style="left:688px;top:298px" width="6" height="10"><path d="M1 1L5 5L1 9" fill="none" stroke="#666" stroke-width="1.2"/></svg>
<div class="a" style="left:577px;top:336px;font-size:16px;color:#555;">人力协同</div>
<svg class="a" style="left:688px;top:338px" width="6" height="10"><path d="M1 1L5 5L1 9" fill="none" stroke="#666" stroke-width="1.2"/></svg>
<div class="a" style="left:577px;top:376px;font-size:16px;color:#555;">财务协同</div>
<svg class="a" style="left:688px;top:378px" width="6" height="10"><path d="M1 1L5 5L1 9" fill="none" stroke="#666" stroke-width="1.2"/></svg>
<div class="a" style="left:577px;top:416px;font-size:16px;color:#555;">质量协同</div>
<svg class="a" style="left:688px;top:418px" width="6" height="10"><path d="M1 1L5 5L1 9" fill="none" stroke="#666" stroke-width="1.2"/></svg>
<div class="a" style="left:577px;top:456px;font-size:16px;color:#555;">基础数据</div>
<svg class="a" style="left:685px;top:459px" width="10" height="6"><path d="M1 1L5 5L9 1" fill="none" stroke="#666" stroke-width="1.2"/></svg>
<svg class="a" style="left:557px;top:298px;" width="11" height="10" viewBox="0 0 11 10" fill="none" stroke="#3a3a3a" stroke-width="1"><g transform="translate(.5 .5)"><path d="M3.5 0H7.5V3H3.5Z M0 6H4V9H0Z M7 6H11V9H7Z M1 4H10" fill="#777" stroke="none"/></g></svg>
<svg class="a" style="left:557px;top:337px;" width="11" height="12" viewBox="0 0 11 12" fill="none" stroke="#3a3a3a" stroke-width="1"><g transform="translate(.5 .5)"><circle cx="5.5" cy="3" r="2.8" fill="#777" stroke="none"/><path d="M0 12C0 7.5 2.5 6.5 5.5 6.5C8.5 6.5 11 7.5 11 12Z" fill="#777" stroke="none"/></g></svg>
<svg class="a" style="left:557px;top:376px;" width="11" height="13" viewBox="0 0 11 13" fill="none" stroke="#3a3a3a" stroke-width="1"><g transform="translate(.5 .5)"><path d="M3.5 0H7.5L6.5 3H4.5Z M5.5 3.5C9.5 4.5 11 8 11 10C11 12.5 9 13 5.5 13C2 13 0 12.5 0 10C0 8 1.5 4.5 5.5 3.5Z" fill="#777" stroke="none"/><path d="M4 7.5H7M4 9.5H7M5.5 6.5V11.5" stroke="#fff" stroke-width=".8"/></g></svg>
<svg class="a" style="left:556px;top:417px;" width="12" height="12" viewBox="0 0 12 12" fill="none" stroke="#3a3a3a" stroke-width="1"><g transform="translate(.5 .5)"><circle cx="6" cy="6" r="5.5" fill="#888" stroke="none"/><circle cx="6" cy="6" r="3" fill="#bbb" stroke="none"/></g></svg>
<svg class="a" style="left:557px;top:458px;" width="10" height="10" viewBox="0 0 10 10" fill="none" stroke="#3a3a3a" stroke-width="1"><g transform="translate(.5 .5)"><path d="M0.5 0V9.5H10 M2.5 9V5 M4.5 9V3 M6.5 9V6 M8.5 9V4" stroke="#888" stroke-width="1"/></g></svg>
<div class="a" style="left:540px;top:643px;width:167px;height:39px;background:#eef2fd"></div>
<div class="a" style="left:592px;top:496px;font-size:14px;color:#555;">单位组织</div>
<svg class="a" style="left:689px;top:498px" width="6" height="10"><path d="M1 1L5 5L1 9" fill="none" stroke="#666" stroke-width="1.2"/></svg>
<div class="a" style="left:595px;top:536px;font-size:14px;color:#555;">物流</div>
<svg class="a" style="left:689px;top:538px" width="6" height="10"><path d="M1 1L5 5L1 9" fill="none" stroke="#666" stroke-width="1.2"/></svg>
<div class="a" style="left:592px;top:576px;font-size:14px;color:#555;">工业互联网</div>
<svg class="a" style="left:689px;top:578px" width="6" height="10"><path d="M1 1L5 5L1 9" fill="none" stroke="#666" stroke-width="1.2"/></svg>
<div class="a" style="left:592px;top:616px;font-size:14px;color:#555;">生产</div>
<svg class="a" style="left:689px;top:618px" width="6" height="10"><path d="M1 1L5 5L1 9" fill="none" stroke="#666" stroke-width="1.2"/></svg>
<div class="a" style="left:592px;top:656px;font-size:14px;color:#4a6fd6;">存货</div>
<svg class="a" style="left:686px;top:658px" width="10" height="6"><path d="M1 1L5 5L9 1" fill="none" stroke="#4a6fd6" stroke-width="1.2"/></svg>
<div class="a" style="left:595px;top:696px;font-size:14px;color:#555;">设备</div>
<svg class="a" style="left:689px;top:698px" width="6" height="10"><path d="M1 1L5 5L1 9" fill="none" stroke="#666" stroke-width="1.2"/></svg>
<svg class="a" style="left:570px;top:498px;" width="14" height="12" viewBox="0 0 14 12" fill="none" stroke="#3a3a3a" stroke-width="1"><g transform="translate(.5 .5)"><path d="M5 0H9V3.5H5Z M6.5 3.5V5.5 M1.5 8V5.5H12.5V8 M7 5.5V8 M0 8H3.5V11.5H0Z M5 8H9V11.5H5Z M10.5 8H14V11.5H10.5Z" fill="#777" stroke="#777" stroke-width=".6"/></g></svg>
<svg class="a" style="left:570px;top:539px" width="16" height="10" viewBox="0 0 16 10"><path d="M1 4H14C15.2 4 16 4.5 16 5C16 5.5 15.2 6 14 6H1Z M6 5L8.5 0H10.5L11.5 5L10.5 10H8.5Z M1 5L2 1.5H3.5L4.5 5L3.5 8.5H2Z" fill="#777"/></svg>
<svg class="a" style="left:571px;top:577px;stroke:#888;stroke-width:.9" width="12" height="12" viewBox="0 0 12 12" fill="none" stroke="#3a3a3a" stroke-width="1"><g transform="translate(.5 .5)"><circle cx="6" cy="6" r="5.5"/><path d="M0.5 6H11.5M6 0.5V11.5M2 3H10M2 9H10"/><ellipse cx="6" cy="6" rx="2.5" ry="5.5"/></g></svg>
<svg class="a" style="left:570px;top:616px;" width="14" height="13" viewBox="0 0 14 13" fill="none" stroke="#3a3a3a" stroke-width="1"><g transform="translate(.5 .5)"><circle cx="7" cy="4" r="3.5" fill="#777" stroke="none"/><path d="M2 4H12" stroke="#fff" stroke-width="1"/><path d="M0 13C0 9 3 8 7 8C11 8 14 9 14 13Z" fill="#777" stroke="none"/></g></svg>
<svg class="a" style="left:571px;top:657px" width="11" height="12" viewBox="0 0 11 12"><path d="M5.5 0L11 3V9L5.5 12L0 9V3Z" fill="#4a6fd6"/><path d="M0.6 3.3L5.5 6L10.4 3.3M5.5 6V11.5" stroke="#c8d4f5" stroke-width=".9" fill="none"/></svg>
<svg class="a" style="left:570px;top:696px;" width="14" height="14" viewBox="0 0 14 14" fill="none" stroke="#3a3a3a" stroke-width="1"><g transform="translate(.5 .5)"><path d="M14 0C9 0 5.5 3 3.5 7L0 8L2 9.5L4.5 12L6 14L7 10.5C11 8.5 14 5 14 0Z M2.5 10.5L0 14L3.5 11.5Z" fill="#666" stroke="none"/></g></svg>
<div class="a" style="left:540px;top:732px;width:111px;height:14px;background:#dee1e6;border-radius:0 6px 0 0"></div>
<div class="a" style="left:544px;top:736px;font-size:13px;color:#333;">javascript:void(0);</div>
<svg class="a" style="left:689px;top:736px" width="6" height="10"><path d="M1 1L5 5L1 9" fill="none" stroke="#666" stroke-width="1.2"/></svg>
<div class="a" style="left:716px;top:265px;width:856px;height:481px;background:#f2f2f2"></div>
<div class="a" style="left:1355px;top:264px;width:217px;height:1px;background:#dcdcdc"></div>
<div class="a" style="left:727px;top:275px;width:193px;height:469px;background:#fff;border:1px solid #d6d6d6;border-radius:3px"></div>
<div class="a" style="left:925px;top:275px;width:700px;height:469px;background:#fff;border:1px solid #d6d6d6;border-radius:3px"></div>
<div class="a" style="left:737px;top:287px;font-size:12px;color:#444;-webkit-text-stroke:0.25px #444">树形列表</div>
<div class="a" style="left:728px;top:307px;width:191px;height:1px;background:#eee"></div>
<div class="a" style="left:935px;top:287px;font-size:12px;color:#444;-webkit-text-stroke:0.25px #444">列表信息</div>
<div class="a" style="left:926px;top:307px;width:646px;height:1px;background:#e0e0e0"></div>
<div class="a" style="left:728px;top:308px;width:191px;height:25px;background:#3a8de5"></div>
<svg class="a" style="left:733px;top:315px" width="6" height="10"><path d="M1 1L5 5L1 9Z" fill="none" stroke="#ccd" stroke-width="1"/></svg>
<svg class="a" style="left:744px;top:314px" width="13" height="11"><path d="M0 1.5A1 1 0 0 1 1 0.5H5L6.5 2H12A1 1 0 0 1 13 3V10A1 1 0 0 1 12 11H1A1 1 0 0 1 0 10Z" fill="#fff"/></svg>
<div class="a" style="left:761px;top:315px;font-size:12px;color:#fff;">原材料</div>
<svg class="a" style="left:733px;top:340px" width="6" height="10"><path d="M1 1L5 5L1 9Z" fill="none" stroke="#888" stroke-width="1"/></svg>
<svg class="a" style="left:744px;top:339px" width="13" height="11"><path d="M0 1.5A1 1 0 0 1 1 0.5H5L6.5 2H12A1 1 0 0 1 13 3V10A1 1 0 0 1 12 11H1A1 1 0 0 1 0 10Z" fill="#666"/></svg>
<div class="a" style="left:761px;top:340px;font-size:12px;color:#333;">成品</div>
<svg class="a" style="left:733px;top:365px" width="6" height="10"><path d="M1 1L5 5L1 9Z" fill="none" stroke="#888" stroke-width="1"/></svg>
<svg class="a" style="left:744px;top:364px" width="13" height="11"><path d="M0 1.5A1 1 0 0 1 1 0.5H5L6.5 2H12A1 1 0 0 1 13 3V10A1 1 0 0 1 12 11H1A1 1 0 0 1 0 10Z" fill="#666"/></svg>
<div class="a" style="left:761px;top:365px;font-size:12px;color:#333;">半成品</div>
<svg class="a" style="left:733px;top:390px" width="6" height="10"><path d="M1 1L5 5L1 9Z" fill="none" stroke="#888" stroke-width="1"/></svg>
<svg class="a" style="left:744px;top:389px" width="13" height="11"><path d="M0 1.5A1 1 0 0 1 1 0.5H5L6.5 2H12A1 1 0 0 1 13 3V10A1 1 0 0 1 12 11H1A1 1 0 0 1 0 10Z" fill="#666"/></svg>
<div class="a" style="left:761px;top:390px;font-size:12px;color:#333;">刀具</div>
<svg class="a" style="left:733px;top:415px" width="6" height="10"><path d="M1 1L5 5L1 9Z" fill="none" stroke="#888" stroke-width="1"/></svg>
<svg class="a" style="left:744px;top:414px" width="13" height="11"><path d="M0 1.5A1 1 0 0 1 1 0.5H5L6.5 2H12A1 1 0 0 1 13 3V10A1 1 0 0 1 12 11H1A1 1 0 0 1 0 10Z" fill="#666"/></svg>
<div class="a" style="left:761px;top:415px;font-size:12px;color:#333;">配件</div>
<svg class="a" style="left:744px;top:438px" width="12" height="14"><path d="M0.5 0.5H7.5L11.5 4.5V13.5H0.5Z M7.5 0.5V4.5H11.5" fill="none" stroke="#777" stroke-width="1"/></svg>
<div class="a" style="left:762px;top:440px;font-size:12px;color:#333;">办公用品</div>
<svg class="a" style="left:744px;top:463px" width="12" height="14"><path d="M0.5 0.5H7.5L11.5 4.5V13.5H0.5Z M7.5 0.5V4.5H11.5" fill="none" stroke="#777" stroke-width="1"/></svg>
<div class="a" style="left:762px;top:465px;font-size:12px;color:#333;">劳保用品</div>
<div class="a" style="left:941px;top:321px;width:200px;height:28px;border:1px solid #d4d4d4;border-radius:3px;background:#fff"></div>
<svg class="a" style="left:946px;top:326px;stroke:#aaa;stroke-width:1" width="16" height="17" viewBox="0 0 16 17" fill="none" stroke="#3a3a3a" stroke-width="1"><g transform="translate(.5 .5)"><path d="M1 3H15V16H1Z M4 1V4 M8 1V4 M12 1V4"/><path d="M3.5 7H5M7.5 7H9M11.5 7H13M3.5 10H5M7.5 10H9M11.5 10H13M3.5 13H5M7.5 13H9" stroke-width="1.3"/></g></svg>
<div class="a" style="left:967px;top:328px;font-size:14px;color:#444;">请选择日期查询</div>
<div class="a" style="left:1146px;top:321px;width:120px;height:28px;background:#3564dc;border-radius:3px"></div>
<svg class="a" style="left:1162px;top:328px;stroke:#fff;stroke-width:2.4" width="14" height="14" viewBox="0 0 14 14" fill="none" stroke="#3a3a3a" stroke-width="1"><g transform="translate(.5 .5)"><circle cx="5.8" cy="5.8" r="4.3"/><path d="M9 9L12.5 12.5"/></g></svg>
<div class="a" style="left:1179px;top:328px;font-size:14px;color:#fff;">多条件查询</div>
<div class="a" style="left:1453px;top:320px;width:28px;height:28px;background:#3564dc;border-radius:3px"></div>
<svg class="a" style="left:1460px;top:327px;stroke:#fff;stroke-width:2.2" width="14" height="14" viewBox="0 0 14 14" fill="none" stroke="#3a3a3a" stroke-width="1"><g transform="translate(.5 .5)"><path d="M2.5 6A5 5 0 0 1 11.5 4.5 M11.5 8A5 5 0 0 1 2.5 9.5"/><path d="M8.5 5.5H13V1Z M5.5 8.5H1V13Z" fill="#fff" stroke="none"/></g></svg>
<div class="a" style="left:1495px;top:320px;width:100px;height:28px;background:#3564dc;border-radius:3px"></div>
<svg class="a" style="left:1503px;top:327px;" width="15" height="13" viewBox="0 0 15 13" fill="none" stroke="#3a3a3a" stroke-width="1"><g transform="translate(.5 .5)"><path d="M0 4.5H6V1L11 6.5L6 12V8.5H0Z" fill="#fff" stroke="none"/><path d="M9 1H13A1 1 0 0 1 14 2V11A1 1 0 0 1 13 12H9" stroke="#fff" stroke-width="1.6"/></g></svg>
<div class="a" style="left:1520px;top:327px;font-size:14px;color:#fff;">导入Excel</div>
<div class="a" style="left:926px;top:363px;width:646px;height:40px;background:#f0f2fc"></div>
<div class="a" style="left:1016px;top:365px;width:2px;height:36px;background:#f8f9fe"></div>
<div class="a" style="left:1216px;top:365px;width:2px;height:36px;background:#f8f9fe"></div>
<div class="a" style="left:1516px;top:365px;width:2px;height:36px;background:#f8f9fe"></div>
<div class="a" style="left:934px;top:377px;width:15px;height:15px;border:1px solid #555;border-radius:1px;background:#fff"></div>
<svg class="a" style="left:979px;top:377px" width="13" height="13" viewBox="0 0 13 13"><path d="M11.10 6.50 L12.77 7.09 L12.52 8.35 L10.75 8.26 L9.75 9.75 L10.52 11.35 L9.45 12.07 L8.26 10.75 L6.50 11.10 L5.91 12.77 L4.65 12.52 L4.74 10.75 L3.25 9.75 L1.65 10.52 L0.93 9.45 L2.25 8.26 L1.90 6.50 L0.23 5.91 L0.48 4.65 L2.25 4.74 L3.25 3.25 L2.48 1.65 L3.55 0.93 L4.74 2.25 L6.50 1.90 L7.09 0.23 L8.35 0.48 L8.26 2.25 L9.75 3.25 L11.35 2.48 L12.07 3.55 L10.75 4.74Z" fill="#4a5fc8"/><circle cx="6.5" cy="6.5" r="3.5" fill="#4a5fc8"/><circle cx="6.5" cy="6.5" r="1.8" fill="#f0f2fc"/></svg>
<div class="a" style="left:1021px;top:376px;font-size:14px;color:#5b73c8;">名称</div>
<div class="a" style="left:1221px;top:376px;font-size:14px;color:#5b73c8;">编号</div>
<div class="a" style="left:1521px;top:376px;font-size:14px;color:#5b73c8;">状态</div>
<div class="a" style="left:934px;top:415px;width:15px;height:15px;border:1px solid #555;border-radius:1px;background:#fff"></div>
<div class="a" style="left:983px;top:417px;font-size:12.5px;color:#4a5cc0;">1</div>
<div class="a" style="left:1019px;top:416px;font-size:12px;color:#444;">钢材</div>
<div class="a" style="left:1219px;top:417px;font-size:12px;color:#444;">YCL-GC</div>
<div class="a" style="left:1519px;top:416px;font-size:12px;color:#444;">启用</div>
<div class="a" style="left:926px;top:444px;width:646px;height:39px;background:#f0f2fc"></div>
<div class="a" style="left:934px;top:455px;width:15px;height:15px;border:1px solid #555;border-radius:1px;background:#fff"></div>
<div class="a" style="left:983px;top:457px;font-size:12.5px;color:#4a5cc0;">2</div>
<div class="a" style="left:1019px;top:456px;font-size:12px;color:#444;">锻件</div>
<div class="a" style="left:1219px;top:457px;font-size:12px;color:#444;">YCL-DJ</div>
<div class="a" style="left:1519px;top:456px;font-size:12px;color:#444;">启用</div>
<div class="a" style="left:934px;top:495px;width:15px;height:15px;border:1px solid #555;border-radius:1px;background:#fff"></div>
<div class="a" style="left:983px;top:497px;font-size:12.5px;color:#4a5cc0;">3</div>
<div class="a" style="left:1019px;top:496px;font-size:12px;color:#444;">大轮</div>
<div class="a" style="left:1219px;top:497px;font-size:12px;color:#444;">YCL-DL</div>
<div class="a" style="left:1519px;top:496px;font-size:12px;color:#444;">启用</div>
<div class="a" style="left:926px;top:524px;width:646px;height:39px;background:#f0f2fc"></div>
<div class="a" style="left:934px;top:535px;width:15px;height:15px;border:1px solid #555;border-radius:1px;background:#fff"></div>
<div class="a" style="left:983px;top:537px;font-size:12.5px;color:#4a5cc0;">4</div>
<div class="a" style="left:1019px;top:536px;font-size:12px;color:#444;">轴（小轮）</div>
<div class="a" style="left:1219px;top:537px;font-size:12px;color:#444;">YCL-Z</div>
<div class="a" style="left:1519px;top:536px;font-size:12px;color:#444;">启用</div>
<div class="a" style="left:934px;top:575px;width:15px;height:15px;border:1px solid #555;border-radius:1px;background:#fff"></div>
<div class="a" style="left:983px;top:577px;font-size:12.5px;color:#4a5cc0;">5</div>
<div class="a" style="left:1019px;top:576px;font-size:12px;color:#444;">消耗品</div>
<div class="a" style="left:1219px;top:577px;font-size:12px;color:#444;">YCL-XHP</div>
<div class="a" style="left:1519px;top:576px;font-size:12px;color:#444;">启用</div>
<div class="a" style="left:926px;top:703px;width:646px;height:1px;background:#dedede"></div>
<div class="a" style="left:937px;top:717px;font-size:14px;color:#999;letter-spacing:-0.25px">显示第 1 - 5 条记录|检索到 5 条记录</div>
</div></div></body></html>
